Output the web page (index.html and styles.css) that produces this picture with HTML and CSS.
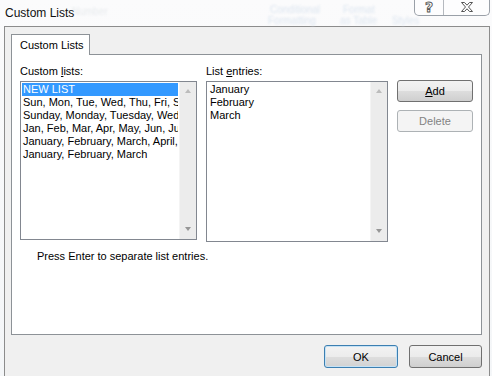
FILE: index.html
```html
<!DOCTYPE html>
<html>
<head>
<meta charset="utf-8">
<title>Custom Lists</title>
<link rel="stylesheet" href="styles.css">
</head>
<body>
<div class="screen">
  <div class="ribbon-ghost">
    <span class="g g1">Number</span>
    <span class="g g2">Conditional</span>
    <span class="g g3">Formatting</span>
    <span class="g g4">Format</span>
    <span class="g g5">as Table</span>
    <span class="g g6">Styles</span>
  </div>
  <div class="titlebar">
    <span class="title">Custom Lists</span>
    <div class="caption-btns">
      <span class="cap help">?</span>
      <span class="cap close">
        <svg width="16" height="12" viewBox="0 0 16 12"><path d="M2.5 1.5h3l2.5 2.7 2.5-2.7h3l-4 4.5 4 4.5h-3l-2.5-2.7-2.5 2.7h-3l4-4.5z" fill="#fff" stroke="#555" stroke-width="1" stroke-linejoin="round"/></svg>
      </span>
    </div>
  </div>
  <div class="client">
    <div class="tabs"><div class="tab">Custom Lists</div></div>
    <div class="page">
      <div class="row">
        <div class="col col-lists">
          <div class="label">Custom <u>l</u>ists:</div>
          <div class="listbox lb-lists">
            <ul class="items">
              <li class="selected">NEW LIST</li>
              <li>Sun, Mon, Tue, Wed, Thu, Fri, Sat</li>
              <li>Sunday, Monday, Tuesday, Wednesday, Thursday</li>
              <li>Jan, Feb, Mar, Apr, May, Jun, Jul, Aug</li>
              <li>January, February, March, April, May</li>
              <li>January, February, March</li>
            </ul>
            <div class="scrollbar"><span class="arrow up"></span><span class="arrow down"></span></div>
          </div>
        </div>
        <div class="col col-entries">
          <div class="label">List <u>e</u>ntries:</div>
          <div class="listbox lb-entries">
            <ul class="items">
              <li>January</li>
              <li>February</li>
              <li>March</li>
            </ul>
            <div class="scrollbar"><span class="arrow up"></span><span class="arrow down"></span></div>
          </div>
        </div>
        <div class="col col-btns">
          <button class="btn btn-add"><u>A</u>dd</button>
          <button class="btn btn-disabled">Delete</button>
        </div>
      </div>
      <p class="hint">Press Enter to separate list entries.</p>
    </div>
    <div class="footer">
      <button class="btn btn-default">OK</button>
      <button class="btn btn-cancel">Cancel</button>
    </div>
  </div>
</div>
</body>
</html>
```
FILE: styles.css
```css
* { box-sizing: border-box; }
html, body { margin: 0; padding: 0; }
body {
  width: 492px;
  height: 376px;
  overflow: hidden;
  font-family: "Liberation Sans", Arial, sans-serif;
  font-size: 11px;
  color: #000;
  background: #f7f8fa;
}
.screen {
  position: relative;
  width: 492px;
  height: 376px;
  background: linear-gradient(#fbfbfc, #f4f6f8);
}
.ribbon-ghost { position: absolute; inset: 0; pointer-events: none; }
.g {
  position: absolute;
  font-size: 10px;
  color: #dde6f0;
  filter: blur(0.9px);
}
.g1 { left: 72px; top: 6px; color: #e8ebee; }
.g2 { left: 270px; top: 4px; }
.g3 { left: 268px; top: 15px; }
.g4 { left: 343px; top: 4px; }
.g5 { left: 340px; top: 15px; }
.g6 { left: 392px; top: 15px; }

.titlebar {
  position: relative;
  height: 26px;
  display: flex;
  align-items: center;
  padding-left: 5px;
}
.title {
  font-size: 12px;
  color: #111;
  margin-top: -1px;
}
.caption-btns {
  position: absolute;
  top: -1px;
  left: 414px;
  width: 76px;
  height: 17px;
  display: flex;
  border: 1px solid #9aa0a8;
  border-top: none;
  border-radius: 0 0 5px 5px;
  background: rgba(255,255,255,0.55);
}
.cap {
  display: flex;
  align-items: center;
  justify-content: center;
}
.help {
  width: 29px;
  border-right: 1px solid #b5b9bf;
  font-family: "DejaVu Sans", sans-serif;
  font-weight: bold;
  font-size: 14px;
  color: #fff;
  -webkit-text-stroke: 0.9px #555;
}
.close { flex: 1; }

.client {
  margin-left: 4px;
  width: 486px;
  height: 350px;
  border: 1px solid #8c8c8c;
  border-bottom: none;
  background: #f0f0f0;
  padding: 7px 0 0 6px;
}
.tabs { display: flex; height: 20px; position: relative; z-index: 1; }
.tab {
  width: 79px;
  height: 21px;
  background: #fff;
  border: 1px solid #8d9297;
  border-bottom: none;
  padding: 4px 0 0 8px;
  font-size: 11px;
}
.page {
  width: 471px;
  height: 281px;
  background: #fff;
  border: 1px solid #8d9297;
  padding: 10px 0 0 8px;
}
.row { display: flex; gap: 9px; }
.col { display: flex; flex-direction: column; }
.label { height: 13px; line-height: 13px; margin-bottom: 3px; }
.label u { text-decoration-thickness: 1px; }
.listbox {
  display: flex;
  border: 1px solid #828790;
  background: #fff;
}
.lb-lists { width: 177px; height: 159px; }
.lb-entries { width: 182px; height: 161px; }
.items {
  flex: 1;
  list-style: none;
  margin: 0;
  padding: 1px 1px 0 1px;
  overflow: hidden;
}
.items li {
  height: 13px;
  line-height: 13px;
  padding-left: 1px;
  white-space: nowrap;
  overflow: hidden;
}
.items li.selected { background: #3399ff; color: #fff; }
.lb-entries .items { padding: 1px 0 0 2px; }
.scrollbar {
  width: 17px;
  background: #ececec;
  border-left: 1px solid #f4f4f4;
  display: flex;
  flex-direction: column;
  justify-content: space-between;
  align-items: center;
  padding: 7px 0 8px;
}
.arrow {
  width: 0; height: 0;
  border-left: 3.5px solid transparent;
  border-right: 3.5px solid transparent;
}
.arrow.up { border-bottom: 4px solid #bcbcbc; }
.arrow.down { border-top: 4px solid #969696; }

.col-btns { padding-top: 15px; gap: 8px; }
.btn {
  font-family: "Liberation Sans", Arial, sans-serif;
  font-size: 11px;
  color: #000;
  border: 1px solid #707070;
  border-radius: 3px;
  background: linear-gradient(#f2f2f2 0%, #ebebeb 50%, #dddddd 51%, #cfcfcf 100%);
  padding: 0;
  cursor: default;
}
.btn-add, .btn-disabled { width: 76px; height: 22px; }
.btn-disabled {
  border-color: #adb2b5;
  background: #f4f4f4;
  color: #838383;
}
.hint { margin: 8px 0 0 17px; line-height: 13px; }

.footer {
  display: flex;
  gap: 11px;
  padding: 10px 0 0 313px;
}
.btn-default {
  width: 74px;
  height: 23px;
  border-color: #3c7fb1;
  box-shadow: inset 0 0 0 1px #c6e2f5;
  background: linear-gradient(#f3f3f3 0%, #ececec 50%, #dedede 51%, #d2d2d2 100%);
}
.btn-cancel { width: 73px; height: 23px; }
```
